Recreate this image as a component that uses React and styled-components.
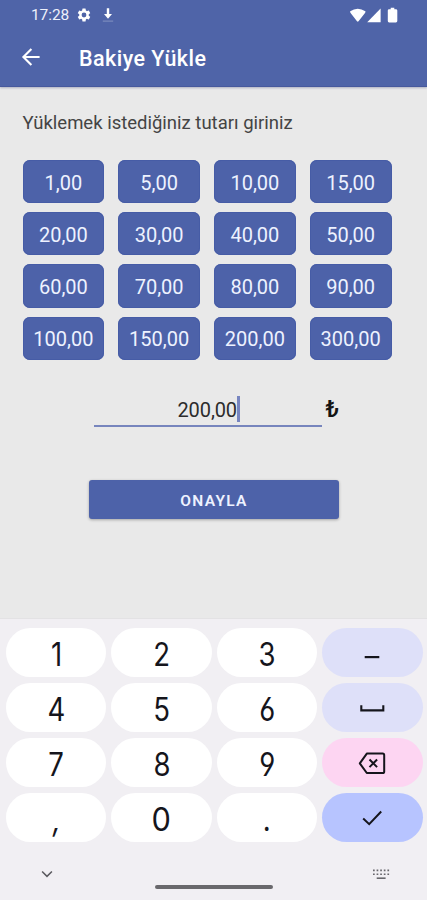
import React, { useState } from 'react';
import styled, { createGlobalStyle } from 'styled-components';

const AMOUNTS = [
    '1,00', '5,00', '10,00', '15,00',
    '20,00', '30,00', '40,00', '50,00',
    '60,00', '70,00', '80,00', '90,00',
    '100,00', '150,00', '200,00', '300,00',
];

const KEYS = [
    { id: '1' }, { id: '2' }, { id: '3' }, { id: 'minus', tone: 'soft' },
    { id: '4' }, { id: '5' }, { id: '6' }, { id: 'space', tone: 'soft' },
    { id: '7' }, { id: '8' }, { id: '9' }, { id: 'delete', tone: 'pink' },
    { id: ',' }, { id: '0' }, { id: '.' }, { id: 'done', tone: 'blue' },
];

const KEY_COLORS = {
    soft: '#dee0f9',
    pink: '#fdd5f2',
    blue: '#b7c4ff',
};

const KEY_ICONS = {
    minus: (
        <svg width="30" height="30" viewBox="0 0 30 30" fill="none" stroke="#15151c" strokeWidth="2.2">
            <path d="M7.7 19.1H22.3" />
        </svg>
    ),
    space: (
        <svg width="30" height="30" viewBox="0 0 30 30" fill="none" stroke="#15151c" strokeWidth="2.1">
            <path d="M4.3 12.3V17.4H26.3V12.3" />
        </svg>
    ),
    delete: (
        <svg width="30" height="30" viewBox="0 0 30 30" fill="none" stroke="#15151c" strokeWidth="2" strokeLinejoin="round">
            <path d="M9.8 5.6H25.6Q27.2 5.6 27.2 7.2V23.4Q27.2 25 25.6 25H9.8L2.8 15.3Z" />
            <path d="M12.5 11.5L20.1 19.1M20.1 11.5L12.5 19.1" />
        </svg>
    ),
    done: (
        <svg width="30" height="30" viewBox="0 0 30 30" fill="none" stroke="#15151c" strokeWidth="2">
            <path d="M6.2 15.5L12.2 21.2L24.2 8.5" />
        </svg>
    ),
};

function App() {
    const [amount, setAmount] = useState('200,00');

    const onKey = (id) => {
        if (id === 'delete') {
            setAmount(amount.slice(0, -1));
        } else if (id.length === 1) {
            setAmount(amount + id);
        }
    };

    return (
        <Screen>
            <GlobalStyle />
            <Header>
                <StatusBar>
                    <Clock>17:28</Clock>
                    <GearIcon />
                    <DownloadIcon />
                    <Signals />
                </StatusBar>
                <TitleBar>
                    <BackIcon />
                    <Title>Bakiye Yükle</Title>
                </TitleBar>
            </Header>
            <Content>
                <Label>Yüklemek istediğiniz tutarı giriniz</Label>
                <AmountGrid>
                    {AMOUNTS.map((value) => (
                        <AmountButton key={value} onClick={() => setAmount(value)}>{value}</AmountButton>
                    ))}
                </AmountGrid>
                <AmountRow>
                    <AmountField>
                        <span>{amount}</span>
                        <Caret />
                    </AmountField>
                    <Currency>₺</Currency>
                </AmountRow>
                <Submit>ONAYLA</Submit>
            </Content>
            <Keyboard>
                <KeyGrid>
                    {KEYS.map(({ id, tone }) => (
                        <Key key={id} $tone={tone} onClick={() => onKey(id)}>
                            {KEY_ICONS[id] || <KeyText $wide={id === '0'} $slanted={id === ','}>{id}</KeyText>}
                        </Key>
                    ))}
                </KeyGrid>
                <NavBar>
                    <ChevronIcon />
                    <HomeHandle />
                    <KeyboardIcon />
                </NavBar>
            </Keyboard>
        </Screen>
    );
}

export default App;

function GearIcon() {
    return (
        <svg width="16" height="16" viewBox="0 0 24 24" fill="#fff">
            <path d="M19.14 12.94c.04-.3.06-.61.06-.94s-.02-.64-.07-.94l2.03-1.58a.49.49 0 0 0 .12-.61l-1.92-3.32a.49.49 0 0 0-.59-.22l-2.39.96a7 7 0 0 0-1.62-.94l-.36-2.54A.48.48 0 0 0 13.92 2.4h-3.84a.48.48 0 0 0-.47.41l-.36 2.54c-.59.24-1.13.57-1.62.94l-2.39-.96a.48.48 0 0 0-.59.22L2.74 8.87a.48.48 0 0 0 .12.61l2.03 1.58a6 6 0 0 0 0 1.88l-2.03 1.58a.49.49 0 0 0-.12.61l1.92 3.32c.12.22.37.29.59.22l2.39-.96c.5.38 1.03.7 1.62.94l.36 2.54c.05.24.24.41.48.41h3.84c.24 0 .44-.17.47-.41l.36-2.54a7 7 0 0 0 1.62-.94l2.39.96c.22.08.47 0 .59-.22l1.92-3.32a.48.48 0 0 0-.12-.61zM12 15.6a3.6 3.6 0 1 1 0-7.2 3.6 3.6 0 0 1 0 7.2z" />
        </svg>
    );
}

function DownloadIcon() {
    return (
        <DownloadSvg width="12" height="14" viewBox="0 0 12 14">
            <path d="M4.8 0.3H7.2V6H10L6 10.8L2 6H4.8Z" fill="#fff" />
            <path d="M0.8 13.1H11.2" stroke="#fff" strokeOpacity="0.3" />
        </DownloadSvg>
    );
}

function Signals() {
    return (
        <SignalsSvg width="50" height="18" viewBox="0 0 50 18" fill="#fff">
            <path d="M1.2 5.2Q8.7 0.2 16.4 5.2Q16.8 6 16 7L9.5 15.2Q8.8 16.1 8 15.2L1.6 7Q0.8 6 1.2 5.2Z" />
            <path d="M31.6 2.6V16.2H18.2Z" />
            <path d="M40.1 3.2H41.7V1.8H45.3V3.2H46.9Q48.3 3.2 48.3 4.6V15Q48.3 16.4 46.9 16.4H40.1Q38.8 16.4 38.8 15V4.6Q38.8 3.2 40.1 3.2Z" />
        </SignalsSvg>
    );
}

function BackIcon() {
    return (
        <BackSvg width="20" height="20" viewBox="0 0 20 20" fill="none" stroke="#fff" strokeWidth="2.1">
            <path d="M18.6 10H3M10.4 2L2.4 10L10.4 18" />
        </BackSvg>
    );
}

function ChevronIcon() {
    return (
        <svg width="12" height="8" viewBox="0 0 12 8" fill="none" stroke="#5a595e" strokeWidth="1.5">
            <path d="M1.1 1.5L6 6.4L10.9 1.5" />
        </svg>
    );
}

function KeyboardIcon() {
    return (
        <svg width="18" height="12" viewBox="0 0 18 12" fill="none" stroke="#68676c" strokeWidth="1.6">
            <path d="M1 2.4H17.5M1 6.3H17.5" strokeDasharray="1.7 1.9" />
            <path d="M4.7 10.2H13.6" />
        </svg>
    );
}

const GlobalStyle = createGlobalStyle`
    * {
        box-sizing: border-box;
    }

    body {
        margin: 0;
        background: #e9e9e9;
    }

    button {
        border: none;
        padding: 0;
        font-family: inherit;
    }
    `;

const Screen = styled.div`
    display: flex;
    flex-direction: column;
    width: 427px;
    height: 900px;
    overflow: hidden;
    background: #e9e9e9;
    font-family: Roboto, "Liberation Sans", sans-serif;
    `;

const Header = styled.div`
    height: 87px;
    flex: none;
    background: #4f64a8;
    border-bottom: 1px solid #47599d;
    box-shadow: 0 1px 2px rgba(60, 70, 120, 0.35);
    color: #fff;
    `;

const StatusBar = styled.div`
    display: flex;
    align-items: center;
    height: 29px;
    padding: 0 28px 0 31px;
    `;

const Clock = styled.div`
    width: 45px;
    font-size: 15.5px;
    letter-spacing: -0.1px;
    color: #edf0fb;
    `;

const DownloadSvg = styled.svg`
    margin-left: 10px;
    `;

const SignalsSvg = styled.svg`
    margin: 0 0 -1px auto;
    `;

const TitleBar = styled.div`
    display: flex;
    align-items: center;
    gap: 38px;
    height: 58px;
    padding-left: 21px;
    `;

const BackSvg = styled.svg`
    margin-bottom: 2px;
    `;

const Title = styled.div`
    font-size: 21.5px;
    font-weight: 500;
    letter-spacing: 0.45px;
    padding-top: 1px;
    `;

const Content = styled.div`
    display: flex;
    flex-direction: column;
    align-items: center;
    height: 531px;
    flex: none;
    padding: 23px 35.5px 0 22.5px;
    `;

const Label = styled.div`
    align-self: flex-start;
    height: 50px;
    line-height: 27px;
    font-size: 18.5px;
    color: #444;
    white-space: nowrap;
    `;

const AmountGrid = styled.div`
    display: grid;
    grid-template-columns: repeat(4, 1fr);
    grid-auto-rows: 43.2px;
    gap: 9px 14px;
    width: 100%;
    `;

const AmountButton = styled.button`
    padding-top: 2px;
    border-radius: 7px;
    background: #4d62a9;
    box-shadow: inset 0 0 0 1px #465ca6;
    color: #eef2ff;
    font-size: 20px;
    `;

const AmountRow = styled.div`
    display: flex;
    align-self: flex-start;
    gap: 4px;
    margin: 32px 0 0 71px;
    `;

const AmountField = styled.div`
    display: flex;
    align-items: center;
    justify-content: center;
    width: 228px;
    height: 35px;
    padding: 1px 0 0 2px;
    border-bottom: 2px solid #7785bd;
    font-size: 20px;
    color: #2c2c2c;

    span:first-child {
        padding-top: 3px;
        letter-spacing: -0.1px;
    }
    `;

const Caret = styled.span`
    width: 2.5px;
    height: 26px;
    background: #7785c0;
    `;

const Currency = styled.div`
    line-height: 35px;
    font-size: 23.5px;
    font-weight: 500;
    color: #151515;
    `;

const Submit = styled.button`
    align-self: flex-start;
    width: 250px;
    height: 39px;
    margin: 53px 0 0 66.5px;
    padding-top: 3px;
    border-radius: 3px;
    background: #4d62a9;
    box-shadow: 0 1px 3px rgba(0, 0, 0, 0.3);
    color: #eef2ff;
    font-size: 15.5px;
    font-weight: 600;
    letter-spacing: 1.3px;
    `;

const Keyboard = styled.div`
    flex: 1;
    padding: 9px 4.5px 0 6px;
    border-top: 1px solid #e3e2e4;
    background: #f1eff3;
    `;

const KeyGrid = styled.div`
    display: grid;
    grid-template-columns: repeat(4, 1fr);
    grid-auto-rows: 49px;
    gap: 6px 5px;
    `;

const Key = styled.button`
    display: flex;
    align-items: center;
    justify-content: center;
    border-radius: 25px;
    background: ${(props) => KEY_COLORS[props.$tone] || '#fff'};
    `;

const KeyText = styled.span`
    display: inline-block;
    font-family: Inter, "Liberation Sans", sans-serif;
    font-size: 32px;
    font-weight: 400;
    font-feature-settings: "cv03", "cv04";
    line-height: 49px;
    padding-top: 4px;
    color: #15151c;
    font-style: ${(props) => (props.$slanted ? 'italic' : 'normal')};
    transform: scaleX(${(props) => (props.$wide ? 0.96 : 0.86)});
    `;

const NavBar = styled.div`
    display: flex;
    align-items: center;
    justify-content: space-between;
    height: 64px;
    padding: 0 33px 0 35px;
    `;

const HomeHandle = styled.div`
    width: 118px;
    height: 4px;
    margin: 26px 0 0 3px;
    border-radius: 2px;
    background: #69686c;
    `;
